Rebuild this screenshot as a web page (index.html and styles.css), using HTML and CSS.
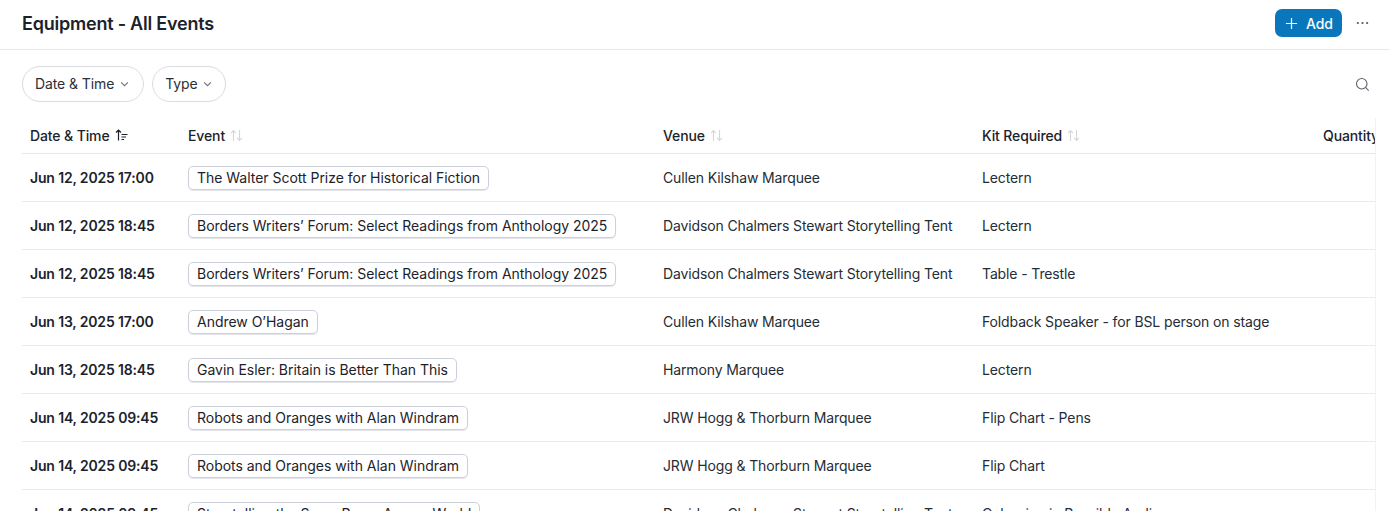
FILE: index.html
```html
<!DOCTYPE html>
<html lang="en">
<head>
<meta charset="utf-8">
<title>Equipment - All Events</title>
<link rel="stylesheet" href="styles.css">
</head>
<body>
<header class="topbar">
  <h1 class="title">Equipment - All Events</h1>
  <div class="actions">
    <button class="add-btn"><svg class="plus" viewBox="0 0 14 14"><path d="M7 1v12M1 7h12"/></svg>Add</button>
    <svg class="more" viewBox="0 0 14 4"><circle cx="2" cy="2" r="1.2"/><circle cx="7" cy="2" r="1.2"/><circle cx="12" cy="2" r="1.2"/></svg>
  </div>
</header>
<div class="filters">
  <div class="filter-group">
    <button class="pill">Date &amp; Time<svg class="chev" viewBox="0 0 8 5"><path d="M1 1l3 3 3-3"/></svg></button>
    <button class="pill pill-short">Type<svg class="chev" viewBox="0 0 8 5"><path d="M1 1l3 3 3-3"/></svg></button>
  </div>
  <svg class="search" viewBox="0 0 16 16"><circle cx="7.2" cy="7.2" r="5.6"/><path d="M11.4 11.4l3.2 3.2"/></svg>
</div>
<div class="table-wrap">
<table class="grid">
  <colgroup><col class="c1"><col class="c2"><col class="c3"><col class="c4"><col class="c5"></colgroup>
  <thead>
    <tr>
      <th><span class="th-in">Date &amp; Time<svg class="sort-on" viewBox="0 0 13 12"><path d="M3.500 11.500V1M1 3.500L3.500 1 6 3.500M6.500 5.500h6M6.500 8h4.500M6.500 10.500h2.500"/></svg></span></th>
      <th><span class="th-in">Event<svg class="sort" viewBox="0 0 12 12"><path d="M3.200 11V1.500M1 3.700l2.200-2.200 2.200 2.200M8.800 1v9.500M6.600 8.300l2.200 2.200 2.200-2.200"/></svg></span></th>
      <th><span class="th-in">Venue<svg class="sort" viewBox="0 0 12 12"><path d="M3.200 11V1.500M1 3.700l2.200-2.200 2.200 2.200M8.800 1v9.500M6.600 8.300l2.200 2.200 2.200-2.200"/></svg></span></th>
      <th><span class="th-in">Kit Required<svg class="sort" viewBox="0 0 12 12"><path d="M3.200 11V1.500M1 3.700l2.200-2.200 2.200 2.200M8.800 1v9.500M6.600 8.300l2.200 2.200 2.200-2.200"/></svg></span></th>
      <th>Quantity</th>
    </tr>
  </thead>
  <tbody>
    <tr><td class="date">Jun 12, 2025 17:00</td><td><span class="tag">The Walter Scott Prize for Historical Fiction</span></td><td>Cullen Kilshaw Marquee</td><td>Lectern</td><td></td></tr>
    <tr><td class="date">Jun 12, 2025 18:45</td><td><span class="tag">Borders Writers’ Forum: Select Readings from Anthology 2025</span></td><td>Davidson Chalmers Stewart Storytelling Tent</td><td>Lectern</td><td></td></tr>
    <tr><td class="date">Jun 12, 2025 18:45</td><td><span class="tag">Borders Writers’ Forum: Select Readings from Anthology 2025</span></td><td>Davidson Chalmers Stewart Storytelling Tent</td><td>Table - Trestle</td><td></td></tr>
    <tr><td class="date">Jun 13, 2025 17:00</td><td><span class="tag">Andrew O’Hagan</span></td><td>Cullen Kilshaw Marquee</td><td>Foldback Speaker - for BSL person on stage</td><td></td></tr>
    <tr><td class="date">Jun 13, 2025 18:45</td><td><span class="tag">Gavin Esler: Britain is Better Than This</span></td><td>Harmony Marquee</td><td>Lectern</td><td></td></tr>
    <tr><td class="date">Jun 14, 2025 09:45</td><td><span class="tag">Robots and Oranges with Alan Windram</span></td><td>JRW Hogg &amp; Thorburn Marquee</td><td>Flip Chart - Pens</td><td></td></tr>
    <tr><td class="date">Jun 14, 2025 09:45</td><td><span class="tag">Robots and Oranges with Alan Windram</span></td><td>JRW Hogg &amp; Thorburn Marquee</td><td>Flip Chart</td><td></td></tr>
    <tr><td class="date">Jun 14, 2025 09:45</td><td><span class="tag">Storytelling the Same Page: Across World</span></td><td>Davidson Chalmers Stewart Storytelling Tent</td><td>Colouring in Possible Audio</td><td></td></tr>
  </tbody>
</table>
</div>
</body>
</html>
```
FILE: styles.css
```css
* { box-sizing: border-box; }
html, body { margin: 0; height: 100%; overflow: hidden; background: #fff; }
body { font-family: Inter, "Liberation Sans", sans-serif; font-size: 14px; color: #1c222b; }
.topbar { height: 50px; display: flex; align-items: center; justify-content: space-between; padding: 0 20px 3px 22px; border-bottom: 1px solid #e5e7eb; }
.title { margin: 0; padding-top: 1px; font-size: 18px; font-weight: 600; line-height: 24px; letter-spacing: -0.22px; }
.actions { display: flex; align-items: center; gap: 14px; }
.add-btn { height: 28px; width: 67px; display: flex; align-items: center; justify-content: center; gap: 8px; padding: 0 0 0 1px; border: 0; border-radius: 7px; background: #0a77bd; color: #fff; font: 500 14px Inter, sans-serif; letter-spacing: -0.1px; }
.plus { width: 13px; height: 13px; fill: none; stroke: #fff; stroke-width: 1.3; }
.more { width: 13px; height: 4px; fill: #55595f; }
.filters { height: 68px; display: flex; align-items: center; justify-content: space-between; padding: 0 19px 0 22px; }
.filter-group { display: flex; gap: 8px; }
.pill { height: 36px; display: flex; align-items: center; gap: 6px; padding: 0 14px 2px 12px; border: 1px solid #d9dce1; border-radius: 18px; background: #fff; color: #2a3039; font: 400 14px Inter, sans-serif; letter-spacing: -0.1px; }
.pill-short { gap: 5px; padding: 0 13px 2px 12px; }
.chev { width: 9px; height: 6px; margin-top: 2px; fill: none; stroke: #70757c; stroke-width: 1; }
.search { width: 15px; height: 15px; fill: none; stroke: #5f646b; stroke-width: 1.2; }
.table-wrap { margin-left: 22px; width: 1354px; overflow: hidden; border-right: 1px solid #f1f2f4; }
.grid { border-collapse: collapse; table-layout: fixed; width: 1500px; }
.c1 { width: 158px; } .c2 { width: 475px; } .c3 { width: 319px; } .c4 { width: 341px; } .c5 { width: 207px; }
th { height: 35px; padding: 0 8px; text-align: left; font-weight: 500; font-size: 14px; white-space: nowrap; border-bottom: 1px solid #e5e7eb; letter-spacing: -0.12px; }
.th-in { display: inline-flex; align-items: center; gap: 5px; }
.sort-on { width: 13px; height: 12px; fill: none; stroke: #1c222b; stroke-width: 1.2; }
.sort { width: 13px; height: 13px; fill: none; stroke: #d3d6da; stroke-width: 1; }
td { height: 48px; padding: 0 8px; white-space: nowrap; border-bottom: 1px solid #e8eaed; color: #262c35; letter-spacing: -0.13px; }
.date { font-weight: 600; color: #1c222b; letter-spacing: -0.16px; }
.tag { display: inline-block; height: 24px; margin-top: 1px; vertical-align: top; line-height: 22px; padding: 0 8px; border: 1px solid #ccd0d8; border-radius: 5px; box-shadow: 0 1px 1px #e3e5ec; color: #1c222b; letter-spacing: -0.025px; }
```
